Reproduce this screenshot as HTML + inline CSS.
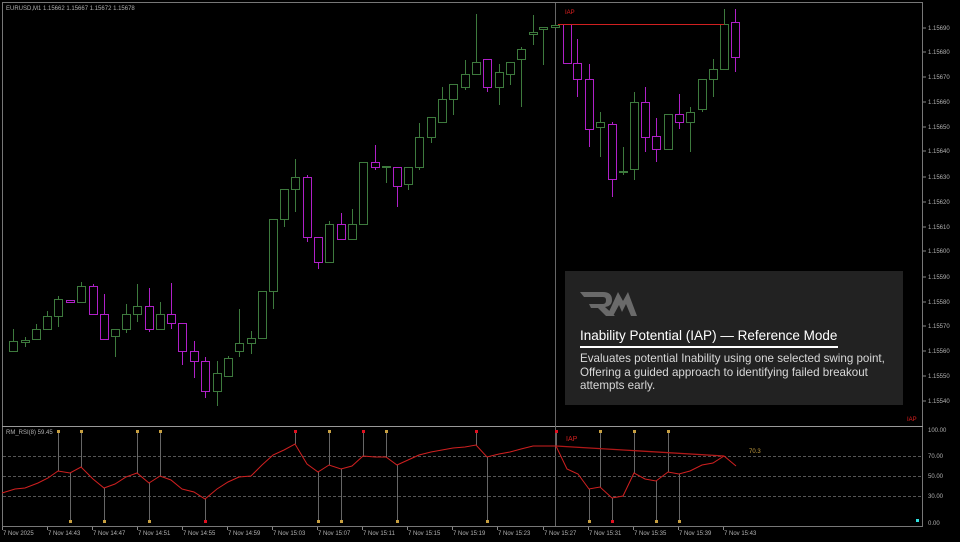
<!DOCTYPE html>
<html><head><meta charset="utf-8">
<style>
html,body{margin:0;padding:0;background:#000;width:960px;height:542px;overflow:hidden}
svg{display:block}
.ax{font-family:"Liberation Sans",sans-serif;font-size:6px;fill:#b0b0b0}
#box{position:absolute;left:565px;top:271px;width:338px;height:134px;background:#222;font-family:"Liberation Sans",sans-serif}
#box .t{position:absolute;left:15px;top:57px;color:#fff;font-size:13.5px;white-space:nowrap}
#box .u{position:absolute;left:15px;top:75px;width:258px;height:2px;background:#fff}
#box .b{position:absolute;left:15px;top:81px;color:#d8d8d8;font-size:11.6px;line-height:13.6px;width:318px}
</style></head><body>
<svg id="s" width="960" height="542" xmlns="http://www.w3.org/2000/svg"></svg>
<div id="box">
<svg width="60" height="32" style="position:absolute;left:14px;top:16px">
<path d="M1 5 H24 Q33 5 33 13 Q33 19 26 20 L36 29 H27 L19 21 H12 L10 17 H24 Q27 17 27 13 Q27 10 24 10 H5 Z" fill="#6a6a6a"/>
<path d="M28 29 L39 5 L44 14 L49 5 L58 29 H52 L47 17 L43 25 L40 18 L34 29 Z" fill="#6a6a6a"/>
</svg>
<div class="t">Inability Potential (IAP) — Reference Mode</div>
<div class="u"></div>
<div class="b">Evaluates potential Inability using one selected swing point,<br>Offering a guided approach to identifying failed breakout<br>attempts early.</div>
</div>
<script>
const s=document.getElementById('s');let h='';
const G='#3d7a3d',M='#b020c8';
h+='<rect x="2.5" y="2.5" width="920" height="524" fill="none" stroke="#777" stroke-width="1"/>';
h+='<line x1="2" y1="426.5" x2="923" y2="426.5" stroke="#999"/>';
h+='<line x1="555.5" y1="3" x2="555.5" y2="526" stroke="#666"/>';
h+='<text x="6" y="10" class="ax" fill="#ddd">EURUSD,M1  1.15662 1.15667 1.15672 1.15678</text>';
const pl=[[28,'1.15690'],[52,'1.15680'],[77,'1.15670'],[102,'1.15660'],[127,'1.15650'],[151,'1.15640'],[177,'1.15630'],[202,'1.15620'],[227,'1.15610'],[251,'1.15600'],[277,'1.15590'],[302,'1.15580'],[326,'1.15570'],[351,'1.15560'],[376,'1.15550'],[401,'1.15540']];
pl.forEach(p=>{h+=`<line x1="923" y1="${p[0]}" x2="926" y2="${p[0]}" stroke="#888"/><text x="928" y="${p[0]+2}" class="ax">${p[1]}</text>`});
const c=[[13,351,341,329,351,1],[25,342,340,337,347,1],[36,339,329,324,339,1],[47,329,316,311,329,1],[58,316,299,296,327,1],[70,302,300,300,302,0],[81,302,286,282,302,1],[93,286,314,284,314,0],[104,314,339,294,339,0],[115,336,329,329,357,1],[126,329,314,304,333,1],[137,314,306,284,322,1],[149,306,329,288,332,0],[160,329,314,302,329,1],[171,314,323,283,329,0],[182,323,351,323,365,0],[194,351,361,341,378,0],[205,361,391,357,398,0],[217,391,373,361,406,1],[228,376,358,356,376,1],[239,351,343,309,357,1],[251,343,338,331,354,1],[262,338,291,291,338,1],[273,291,219,219,309,1],[284,219,189,189,227,1],[295,189,177,159,212,1],[307,177,237,175,242,0],[318,237,262,237,269,0],[329,262,224,221,262,1],[341,224,239,213,239,0],[352,239,224,209,239,1],[363,224,162,162,224,1],[375,162,167,145,170,0],[386,166,166,166,183,1],[397,167,186,167,207,0],[408,184,167,167,190,1],[419,167,137,123,170,1],[431,137,117,117,143,1],[442,122,99,87,122,1],[453,99,84,84,115,1],[465,87,74,60,90,1],[476,74,62,14,74,1],[487,59,87,59,92,0],[499,87,72,64,105,1],[510,74,62,62,85,1],[521,59,49,47,107,1],[533,34,32,15,45,1],[543,29,27,27,65,1],[555,27,25,24,27,1],[567,24,63,24,63,0],[577,63,79,39,97,0],[589,79,129,64,147,0],[600,127,122,112,157,1],[612,124,179,122,197,0],[623,171,171,147,175,1],[634,169,102,92,180,1],[645,102,137,87,152,0],[656,136,149,118,162,0],[668,149,114,114,149,1],[679,114,122,94,129,0],[690,122,112,107,152,1],[702,109,79,79,112,1],[713,79,69,59,97,1],[724,69,24,9,69,1],[735,22,57,9,72,0]];
c.forEach(k=>{const[x,o,cl,hi,lo,b]=k;const col=b?G:M;const t=Math.min(o,cl),bt=Math.max(o,cl);
h+=`<line x1="${x+.5}" y1="${hi}" x2="${x+.5}" y2="${lo}" stroke="${col}"/>`;
h+=`<rect x="${x-3.5}" y="${t+.5}" width="8" height="${Math.max(bt-t,1)}" fill="#000" stroke="${col}"/>`;});
h+='<line x1="558" y1="24.5" x2="724" y2="24.5" stroke="#d02020"/>';
h+='<text x="565" y="14" class="ax" style="fill:#e02020">IAP</text>';
h+='<text x="907" y="421" class="ax" style="fill:#e02020">IAP</text>';
[[456,'70.00'],[476,'50.00'],[496,'30.00']].forEach(l=>{h+=`<line x1="3" y1="${l[0]}.5" x2="922" y2="${l[0]}.5" stroke="#555" stroke-dasharray="3,2"/>`});
[[430,'100.00'],[456,'70.00'],[476,'50.00'],[496,'30.00'],[523,'0.00']].forEach(l=>{h+=`<text x="928" y="${l[0]+2}" class="ax">${l[1]}</text>`});
h+='<text x="6" y="434" class="ax">RM_RSI(8) 59.45</text>';
const r=[[2,493],[15,489],[25,488],[38,483],[48,478],[58,471],[70,473],[81,467],[93,479],[104,488],[115,484],[126,477],[137,473],[149,483],[160,476],[171,480],[182,489],[194,492],[205,499],[217,489],[228,482],[239,477],[251,476],[262,465],[273,455],[284,450],[295,444],[307,464],[318,472],[329,465],[341,469],[352,466],[363,456],[375,457],[386,457],[397,465],[408,460],[419,455],[431,452],[442,450],[453,448],[465,447],[476,445],[487,457],[499,454],[510,452],[521,449],[533,446],[544,446],[556,446],[567,469],[578,474],[589,489],[600,487],[612,498],[623,496],[634,473],[645,479],[656,481],[668,472],[679,474],[690,471],[702,465],[713,463],[724,456],[736,466]];
const ry=x=>{for(const p of r)if(Math.abs(p[0]-x)<3)return p[1];return 470};
const dots=[[58,431,'#c8a040'],[81,431,'#c8a040'],[137,431,'#c8a040'],[160,431,'#c8a040'],[329,431,'#c8a040'],[386,431,'#c8a040'],[600,431,'#c8a040'],[634,431,'#c8a040'],[668,431,'#c8a040'],[295,431,'#e01020'],[363,431,'#e01020'],[476,431,'#e01020'],[556,431,'#e01020'],[70,521,'#c8a040'],[104,521,'#c8a040'],[149,521,'#c8a040'],[318,521,'#c8a040'],[341,521,'#c8a040'],[397,521,'#c8a040'],[487,521,'#c8a040'],[589,521,'#c8a040'],[656,521,'#c8a040'],[679,521,'#c8a040'],[205,521,'#e01020'],[612,521,'#e01020']];
dots.forEach(d=>{h+=`<line x1="${d[0]+.5}" y1="${d[1]}" x2="${d[0]+.5}" y2="${ry(d[0])}" stroke="#666"/>`});
dots.forEach(d=>{h+=`<rect x="${d[0]-1}" y="${d[1]-1}" width="3" height="3" fill="${d[2]}"/>`});
h+=`<polyline points="${r.map(p=>p.join(',')).join(' ')}" fill="none" stroke="#d02020" stroke-width="1"/>`;
h+='<line x1="556" y1="446" x2="724" y2="456" stroke="#b01818" stroke-width="1.3"/>';
h+='<text x="566" y="441" class="ax" style="fill:#d02020;font-size:7px">IAP</text>';
h+='<text x="749" y="453" class="ax" style="fill:#c8a040">70.3</text>';
h+='<rect x="916" y="519" width="3" height="3" fill="#30e0e0"/>';
const tl=[[3,'7 Nov 2025'],[48,'7 Nov 14:43'],[93,'7 Nov 14:47'],[138,'7 Nov 14:51'],[183,'7 Nov 14:55'],[228,'7 Nov 14:59'],[273,'7 Nov 15:03'],[318,'7 Nov 15:07'],[363,'7 Nov 15:11'],[408,'7 Nov 15:15'],[453,'7 Nov 15:19'],[498,'7 Nov 15:23'],[544,'7 Nov 15:27'],[589,'7 Nov 15:31'],[634,'7 Nov 15:35'],[679,'7 Nov 15:39'],[724,'7 Nov 15:43']];
tl.forEach(t=>{h+=`<line x1="${t[0]-.5}" y1="527" x2="${t[0]-.5}" y2="530" stroke="#888"/><text x="${t[0]}" y="535" class="ax">${t[1]}</text>`});
s.innerHTML=h;
</script>
</body></html>
